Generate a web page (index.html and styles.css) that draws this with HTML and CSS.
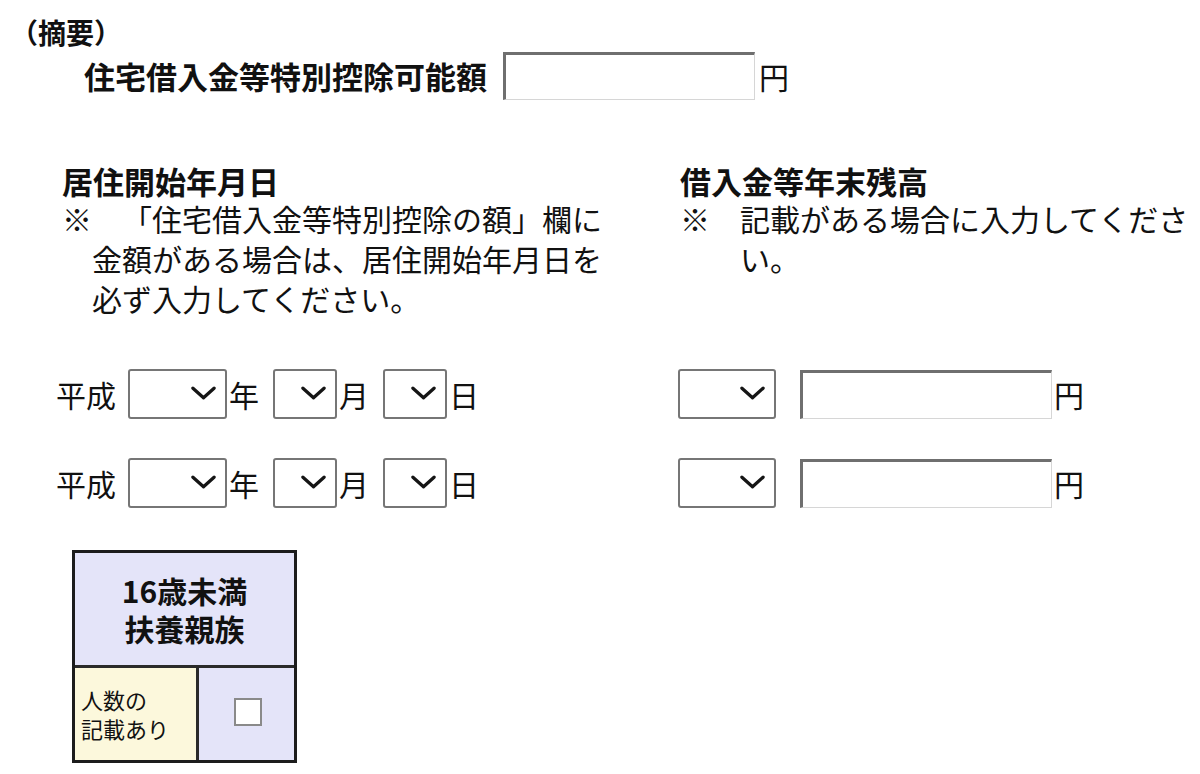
FILE: index.html
```html
<html>
  <head>
    <meta charset="utf-8" />
    <title>住宅借入金等特別控除</title>
    <meta name="viewport" content="width=device-width, initial-scale=1" />
    <link rel="stylesheet" href="styles.css">
  </head>
  <body>
    <p class="section_title">（摘要）</p>

    <div class="limit_row">
      <span class="limit_label">住宅借入金等特別控除可能額</span>
      <input type="text" id="limit_amount" class="yen_input" />
      <span class="unit yen_unit">円</span>
    </div>

    <div class="loan_grid">
      <p class="col_heading">居住開始年月日</p>
      <p class="col_heading">借入金等年末残高</p>
      <p class="note note_date">※　「住宅借入金等特別控除の額」欄に金額がある場合は、居住開始年月日を必ず入力してください。</p>
      <p class="note note_balance">※　記載がある場合に入力してください。</p>

      <!-- 1件目 -->
      <div class="date_row first_row">
        <span class="era">平成</span>
        <span class="pick pick_year">
          <select id="year_1"><option></option><option>27</option><option>28</option><option>29</option><option>30</option></select>
          <svg class="chev" viewBox="0 0 26 15"><path d="M2 2 L13 12 L24 2" /></svg>
        </span>
        <span class="unit">年</span>
        <span class="pick pick_small">
          <select id="month_1"><option></option><option>1</option><option>2</option><option>3</option></select>
          <svg class="chev" viewBox="0 0 26 15"><path d="M2 2 L13 12 L24 2" /></svg>
        </span>
        <span class="unit">月</span>
        <span class="pick pick_small">
          <select id="day_1"><option></option><option>1</option><option>2</option><option>3</option></select>
          <svg class="chev" viewBox="0 0 26 15"><path d="M2 2 L13 12 L24 2" /></svg>
        </span>
        <span class="unit">日</span>
      </div>
      <div class="balance_row first_row">
        <span class="pick pick_kind">
          <select id="kind_1"><option></option><option>住</option><option>増</option></select>
          <svg class="chev" viewBox="0 0 26 15"><path d="M2 2 L13 12 L24 2" /></svg>
        </span>
        <input type="text" id="balance_1" class="yen_input balance_input" />
        <span class="unit">円</span>
      </div>

      <!-- 2件目 -->
      <div class="date_row second_row">
        <span class="era">平成</span>
        <span class="pick pick_year">
          <select id="year_2"><option></option><option>27</option><option>28</option><option>29</option><option>30</option></select>
          <svg class="chev" viewBox="0 0 26 15"><path d="M2 2 L13 12 L24 2" /></svg>
        </span>
        <span class="unit">年</span>
        <span class="pick pick_small">
          <select id="month_2"><option></option><option>1</option><option>2</option><option>3</option></select>
          <svg class="chev" viewBox="0 0 26 15"><path d="M2 2 L13 12 L24 2" /></svg>
        </span>
        <span class="unit">月</span>
        <span class="pick pick_small">
          <select id="day_2"><option></option><option>1</option><option>2</option><option>3</option></select>
          <svg class="chev" viewBox="0 0 26 15"><path d="M2 2 L13 12 L24 2" /></svg>
        </span>
        <span class="unit">日</span>
      </div>
      <div class="balance_row second_row">
        <span class="pick pick_kind">
          <select id="kind_2"><option></option><option>住</option><option>増</option></select>
          <svg class="chev" viewBox="0 0 26 15"><path d="M2 2 L13 12 L24 2" /></svg>
        </span>
        <input type="text" id="balance_2" class="yen_input balance_input" />
        <span class="unit">円</span>
      </div>
    </div>

    <div class="dependents">
      <div class="dep_head">16歳未満<br />扶養親族</div>
      <div class="dep_body">
        <div class="dep_label">人数の<br />記載あり</div>
        <div class="dep_check"><input type="checkbox" id="under16" class="check_box" /></div>
      </div>
    </div>
  </body>
</html>
```

FILE: styles.css
```css
      body {
        font-family: "Noto Sans CJK JP", "Noto Sans", sans-serif;
        background: white;
        color: #111;
        margin: 0;
        padding: 12px 0 0 0;
        font-size: 30px;
        text-spacing-trim: space-all;
      }
      p {
        margin: 0;
      }

      .section_title {
        font-size: 28px;
        font-weight: bold;
        line-height: 40px;
        padding-left: 10px;
      }

      .limit_row {
        display: flex;
        flex-direction: row;
        align-items: center;
        height: 48px;
        padding-left: 84px;
      }
      .limit_label {
        font-size: 31px;
        font-weight: bold;
        line-height: 40px;
      }
      .yen_input {
        box-sizing: border-box;
        width: 252px;
        height: 48px;
        margin: 0 0 0 16px;
        padding: 0 6px;
        font-size: 24px;
        background: white;
        border-top: 3px solid #6f6f6f;
        border-left: 3px solid #6f6f6f;
        border-right: 1px solid #d6d6d6;
        border-bottom: 1px solid #d6d6d6;
        border-radius: 0;
        outline: none;
      }
      .unit {
        line-height: 40px;
        margin-left: 2px;
      }
      .yen_unit {
        margin-left: 4px;
      }

      .loan_grid {
        display: grid;
        grid-template-columns: 618px 520px;
        align-items: start;
        margin: 64px 0 0 62px;
      }
      .col_heading {
        font-size: 31px;
        font-weight: bold;
        line-height: 34px;
      }
      .note {
        line-height: 40px;
      }
      .note_date {
        width: 545px;
        box-sizing: border-box;
        padding-left: 30px;
        text-indent: -30px;
      }
      .note_balance {
        width: 520px;
        box-sizing: border-box;
        padding-left: 60px;
        text-indent: -60px;
      }

      .date_row,
      .balance_row {
        display: flex;
        flex-direction: row;
        align-items: center;
        height: 50px;
      }
      .first_row {
        margin-top: 51px;
      }
      .second_row {
        margin-top: 39px;
      }
      .date_row {
        margin-left: -6px;
      }
      .balance_row {
        margin-left: -2px;
      }
      .era {
        width: 60px;
        line-height: 40px;
      }

      /* select boxes with their own chevron drawn on top */
      .pick {
        position: relative;
        display: block;
        height: 50px;
        margin-left: 14px;
      }
      .pick_year {
        width: 99px;
        margin-left: 12px;
      }
      .pick_small {
        width: 64px;
      }
      .pick_kind {
        width: 98px;
        margin-left: 0;
      }
      .pick select {
        appearance: none;
        -webkit-appearance: none;
        box-sizing: border-box;
        width: 100%;
        height: 100%;
        margin: 0;
        padding: 0 4px;
        font-size: 22px;
        color: transparent;
        background: white;
        border: 2px solid #767676;
        border-radius: 3px;
        outline: none;
      }
      .chev {
        position: absolute;
        right: 11px;
        top: 17px;
        width: 25px;
        height: 15px;
        pointer-events: none;
      }
      .chev path {
        fill: none;
        stroke: #151515;
        stroke-width: 3.4;
        stroke-linecap: round;
        stroke-linejoin: round;
      }
      .balance_input {
        margin-left: 24px;
        height: 49px;
      }

      .dependents {
        box-sizing: border-box;
        width: 225px;
        margin: 42px 0 0 72px;
        border: 3px solid #1c1c1c;
      }
      .dep_head {
        display: flex;
        align-items: center;
        justify-content: center;
        height: 112px;
        text-align: center;
        font-size: 30px;
        font-weight: bold;
        line-height: 38px;
        background: #e4e4f9;
        border-bottom: 3px solid #2a2a2a;
      }
      .dep_body {
        display: grid;
        grid-template-columns: 124px 1fr;
        height: 92px;
      }
      .dep_label {
        display: flex;
        align-items: center;
        box-sizing: border-box;
        padding-left: 6px;
        font-size: 22px;
        line-height: 29px;
        background: #fcf8dc;
        border-right: 3px solid #2a2a2a;
      }
      .dep_check {
        display: flex;
        align-items: center;
        justify-content: center;
        background: #e4e4f9;
      }
      .check_box {
        appearance: none;
        -webkit-appearance: none;
        box-sizing: border-box;
        width: 28px;
        height: 28px;
        margin: 0 0 4px 2px;
        background: white;
        border: 2px solid #8a8a8a;
        border-radius: 0;
      }
```
